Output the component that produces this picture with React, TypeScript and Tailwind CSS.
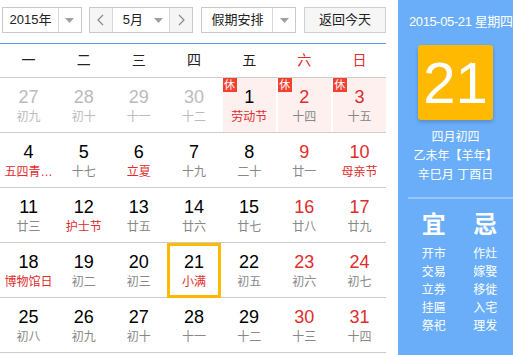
import React from 'react';

type Day = {
  n: number;
  l: string;
  other?: boolean;
  red?: boolean;
  fest?: boolean;
  rest?: boolean;
  sel?: boolean;
};

const weeks: Day[][] = [
  [
    { n: 27, l: '初九', other: true },
    { n: 28, l: '初十', other: true },
    { n: 29, l: '十一', other: true },
    { n: 30, l: '十二', other: true },
    { n: 1, l: '劳动节', fest: true, rest: true },
    { n: 2, l: '十四', red: true, rest: true },
    { n: 3, l: '十五', red: true, rest: true },
  ],
  [
    { n: 4, l: '五四青…', fest: true },
    { n: 5, l: '十七' },
    { n: 6, l: '立夏', fest: true },
    { n: 7, l: '十九' },
    { n: 8, l: '二十' },
    { n: 9, l: '廿一', red: true },
    { n: 10, l: '母亲节', red: true, fest: true },
  ],
  [
    { n: 11, l: '廿三' },
    { n: 12, l: '护士节', fest: true },
    { n: 13, l: '廿五' },
    { n: 14, l: '廿六' },
    { n: 15, l: '廿七' },
    { n: 16, l: '廿八', red: true },
    { n: 17, l: '廿九', red: true },
  ],
  [
    { n: 18, l: '博物馆日', fest: true },
    { n: 19, l: '初二' },
    { n: 20, l: '初三' },
    { n: 21, l: '小满', fest: true, sel: true },
    { n: 22, l: '初五' },
    { n: 23, l: '初六', red: true },
    { n: 24, l: '初七', red: true },
  ],
  [
    { n: 25, l: '初八' },
    { n: 26, l: '初九' },
    { n: 27, l: '初十' },
    { n: 28, l: '十一' },
    { n: 29, l: '十二' },
    { n: 30, l: '十三', red: true },
    { n: 31, l: '十四', red: true },
  ],
];

const weekdays = ['一', '二', '三', '四', '五', '六', '日'];
const yi = ['开市', '交易', '立券', '挂匾', '祭祀'];
const ji = ['作灶', '嫁娶', '移徙', '入宅', '理发'];

const Caret = () => (
  <svg width="9" height="5" viewBox="0 0 9 5">
    <path d="M0 0 L9 0 L4.5 5 Z" fill="#a0a0a0" />
  </svg>
);

const Chevron = ({ left }: { left?: boolean }) => (
  <svg width="7" height="12" viewBox="0 0 7 12">
    <polyline
      points={left ? '6,1 1,6 6,11' : '1,1 6,6 1,11'}
      fill="none"
      stroke="#888"
      strokeWidth="1.2"
    />
  </svg>
);

const Cell: React.FC<{ d: Day }> = ({ d }) => {
  const numColor = d.other ? 'text-[#bbbbbb]' : d.red ? 'text-[#e02c2c]' : 'text-black';
  const lunarColor = d.other ? 'text-[#bbbbbb]' : d.fest ? 'text-[#e02c2c]' : 'text-[#888888]';
  return (
    <div className="relative h-full">
      <div
        className={`flex h-full flex-col items-center pt-[8px] ml-[2px] ${d.rest ? 'bg-[#fff0f0]' : ''}`}
      >
        {d.rest && (
          <span className="absolute left-[2px] top-0 flex h-[14px] w-[14px] items-center justify-center bg-[#f5402f] text-[11px] leading-none text-white">
            休
          </span>
        )}
        <span className={`text-[18px] leading-[22px] ${numColor}`}>{d.n}</span>
        <span className={`mt-px whitespace-nowrap text-[12px] leading-[16px] ${lunarColor}`}>{d.l}</span>
      </div>
      {d.sel && (
        <div className="absolute left-[2px] right-0 top-0 -bottom-px border-[3px] border-[#ffb900]" />
      )}
    </div>
  );
};

export default function App() {
  return (
    <div
      className="flex h-[355px] w-[513px] overflow-hidden bg-white text-[13px] text-[#333]"
      style={{ fontFamily: '"Liberation Sans", "Noto Sans CJK SC", sans-serif' }}
    >
      <div className="w-[386px] shrink-0">
        {/* toolbar */}
        <div className="flex h-[44px] items-start border-b border-[#5b9de9] pt-[7px]">
          <div className="ml-[2px] flex h-[26px] w-[80px] border border-[#c8c8c8]">
            <div className="flex w-[55px] items-center justify-center text-[#222]">2015年</div>
            <div className="flex flex-1 items-center justify-center border-l border-[#d8d8d8]">
              <Caret />
            </div>
          </div>
          <div className="ml-[7px] flex h-[26px] w-[105px] border border-[#c8c8c8]">
            <div className="flex w-[22px] items-center justify-center bg-[#f5f5f5]">
              <Chevron left />
            </div>
            <div className="flex flex-1 items-center border-x border-[#d8d8d8] pl-[10px] pr-[6px] text-[#222]">
              <span>5月</span>
              <span className="ml-auto flex">
                <Caret />
              </span>
            </div>
            <div className="flex w-[22px] items-center justify-center bg-[#f5f5f5]">
              <Chevron />
            </div>
          </div>
          <div className="ml-[8px] flex h-[26px] w-[95px] border border-[#c8c8c8]">
            <div className="flex w-[70px] items-center justify-center text-[#222]">假期安排</div>
            <div className="flex flex-1 items-center justify-center border-l border-[#d8d8d8]">
              <Caret />
            </div>
          </div>
          <div className="ml-[8px] flex h-[26px] w-[82px] items-center justify-center border border-[#d0d0d0] bg-[#f6f6f6] text-[#222]">
            返回今天
          </div>
        </div>
        {/* weekdays */}
        <div className="grid h-[34px] grid-cols-7 items-center border-b border-[#cccccc]">
          {weekdays.map((w, i) => (
            <div
              key={w}
              className={`pl-[2px] text-center text-[14px] ${i >= 5 ? 'text-[#e02c2c]' : 'text-[#222]'}`}
            >
              {w}
            </div>
          ))}
        </div>
        {weeks.map((row, r) => (
          <div key={r} className="grid h-[55px] grid-cols-7 border-b border-[#cccccc]">
            {row.map((d, i) => (
              <Cell key={i} d={d} />
            ))}
          </div>
        ))}
      </div>

      {/* side panel */}
      <div className="ml-[12px] flex h-full flex-1 flex-col bg-[#6aaef9] text-white">
        <div className="mt-[14px] whitespace-nowrap pl-[11px] text-[13px] leading-[16px] tracking-[-0.4px]">
          2015-05-21 星期四
        </div>
        <div className="mx-auto mt-[15px] flex h-[75px] w-[75px] items-center justify-center rounded-[3px] bg-[#ffb900] text-[58px] leading-none shadow-[0_2px_4px_rgba(0,0,0,0.2)]">
          21
        </div>
        <div className="mt-[8px] text-center text-[12px] leading-[19px]">
          <div>四月初四</div>
          <div>乙未年【羊年】</div>
          <div>辛巳月 丁酉日</div>
        </div>
        <div className="ml-[10px] mt-[12px] h-[2px] bg-[#95c7fb]" />
        <div className="mt-[12px] flex justify-around pl-[10px] pr-[2px]">
          {[
            { h: '宜', items: yi },
            { h: '忌', items: ji },
          ].map((c) => (
            <div key={c.h} className="flex flex-col items-center">
              <div className="text-[24px] font-bold leading-[28px]">{c.h}</div>
              <div className="mt-[6px] text-[12px] leading-[18px]">
                {c.items.map((t) => (
                  <div key={t}>{t}</div>
                ))}
              </div>
            </div>
          ))}
        </div>
      </div>
    </div>
  );
}
